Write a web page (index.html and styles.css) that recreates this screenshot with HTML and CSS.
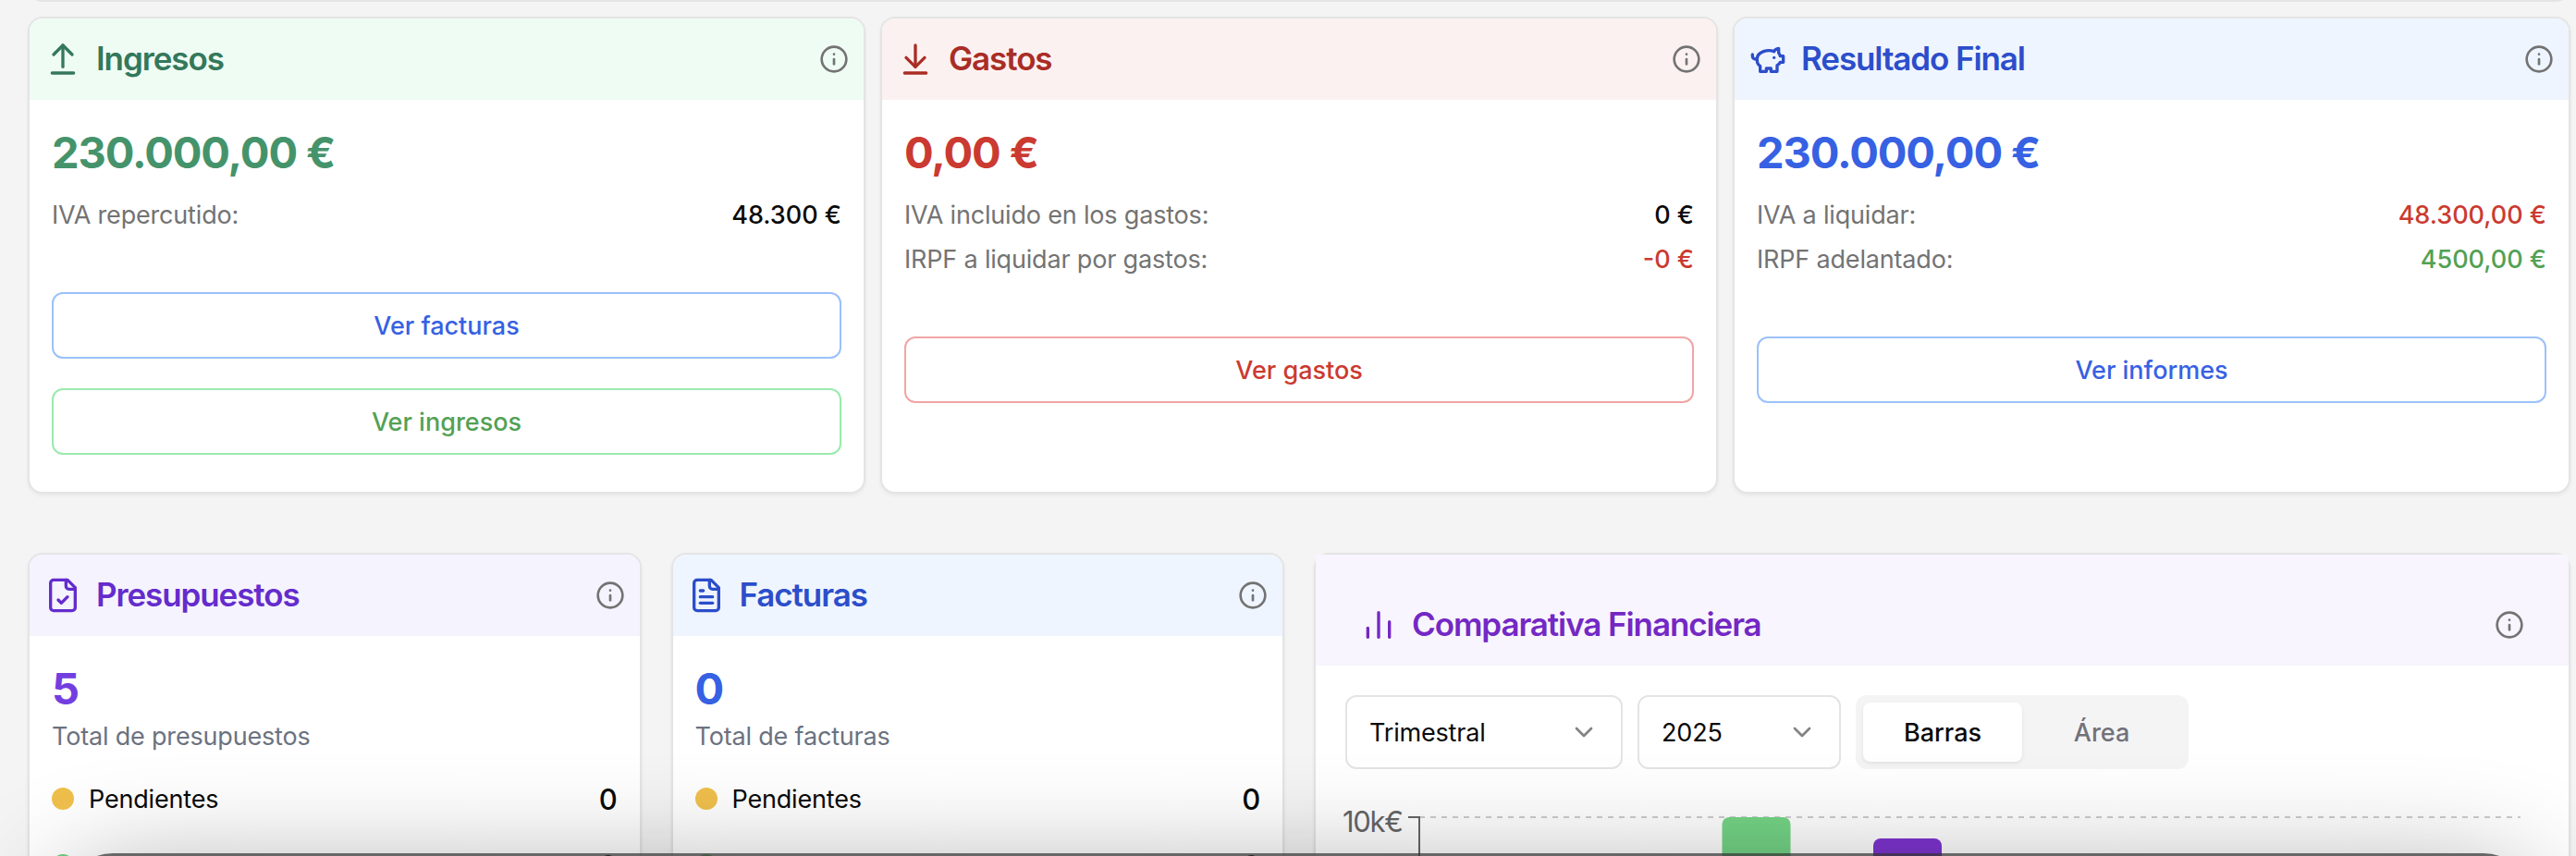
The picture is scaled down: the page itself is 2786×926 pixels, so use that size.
FILE: index.html
```html
<!DOCTYPE html>
<html lang="es">
<head>
<meta charset="utf-8">
<title>Panel financiero</title>
<link rel="stylesheet" href="styles.css">
</head>
<body>
<svg class="sprite" aria-hidden="true">
  <symbol id="info" viewBox="0 0 24 24"><circle cx="12" cy="12" r="10"/><path d="M12 16v-4"/><path d="M12 8h.01"/></symbol>
  <symbol id="chevron" viewBox="0 0 24 24"><path d="m6 9 6 6 6-6"/></symbol>
</svg>
<div class="page">
  <div class="card previous"></div>

  <section class="summary">
    <article class="card">
      <header class="card-header green">
        <svg class="icon" viewBox="0 0 24 24"><path d="m18 9-6-6-6 6"/><path d="M12 3v14"/><path d="M5 21h14"/></svg>
        <h2 class="title">Ingresos</h2>
        <svg class="icon info"><use href="#info"/></svg>
      </header>
      <div class="card-body">
        <div class="amount green-text">230.000,00 €</div>
        <div class="rows">
          <div class="row"><span class="label">IVA repercutido:</span><span class="value">48.300 €</span></div>
        </div>
        <div class="actions">
          <button class="btn blue-btn">Ver facturas</button>
          <button class="btn green-btn">Ver ingresos</button>
        </div>
      </div>
    </article>

    <article class="card">
      <header class="card-header red">
        <svg class="icon" viewBox="0 0 24 24"><path d="M12 17V3"/><path d="m6 11 6 6 6-6"/><path d="M19 21H5"/></svg>
        <h2 class="title">Gastos</h2>
        <svg class="icon info"><use href="#info"/></svg>
      </header>
      <div class="card-body">
        <div class="amount red-text">0,00 €</div>
        <div class="rows">
          <div class="row"><span class="label">IVA incluido en los gastos:</span><span class="value">0 €</span></div>
          <div class="row"><span class="label">IRPF a liquidar por gastos:</span><span class="value red-text">-0 €</span></div>
        </div>
        <div class="actions">
          <button class="btn red-btn">Ver gastos</button>
        </div>
      </div>
    </article>

    <article class="card">
      <header class="card-header blue">
        <svg class="icon" viewBox="0 0 24 24"><path d="M19 5c-1.5 0-2.8 1.4-3 2-3.5-1.5-11-.3-11 5 0 1.8 0 3 2 4.5V20h4v-2h3v2h4v-4c1-.5 1.7-1 2-2h2v-4h-2c0-1-.5-1.5-1-2V5z"/><path d="M2 9v1c0 1.1.9 2 2 2h1"/><path d="M16 11h.01"/></svg>
        <h2 class="title">Resultado Final</h2>
        <svg class="icon info"><use href="#info"/></svg>
      </header>
      <div class="card-body">
        <div class="amount blue-text">230.000,00 €</div>
        <div class="rows">
          <div class="row"><span class="label">IVA a liquidar:</span><span class="value red-text">48.300,00 €</span></div>
          <div class="row"><span class="label">IRPF adelantado:</span><span class="value lime-text">4500,00 €</span></div>
        </div>
        <div class="actions">
          <button class="btn blue-btn">Ver informes</button>
        </div>
      </div>
    </article>
  </section>

  <section class="details">
    <article class="card">
      <header class="card-header violet">
        <svg class="icon" viewBox="0 0 24 24"><path d="M15 2H6a2 2 0 0 0-2 2v16a2 2 0 0 0 2 2h12a2 2 0 0 0 2-2V7Z"/><path d="M14 2v4a2 2 0 0 0 2 2h4"/><path d="m9 15 2 2 4-4"/></svg>
        <h2 class="title">Presupuestos</h2>
        <svg class="icon info"><use href="#info"/></svg>
      </header>
      <div class="card-body">
        <div class="amount violet-text">5</div>
        <div class="caption">Total de presupuestos</div>
        <div class="statuses">
          <div class="status"><i class="dot amber-dot"></i><span>Pendientes</span><b class="count">0</b></div>
          <div class="status"><i class="dot green-dot"></i><span>Aceptados</span><b class="count">0</b></div>
        </div>
      </div>
    </article>

    <article class="card">
      <header class="card-header blue">
        <svg class="icon" viewBox="0 0 24 24"><path d="M15 2H6a2 2 0 0 0-2 2v16a2 2 0 0 0 2 2h12a2 2 0 0 0 2-2V7Z"/><path d="M14 2v4a2 2 0 0 0 2 2h4"/><path d="M10 9H8"/><path d="M16 13H8"/><path d="M16 17H8"/></svg>
        <h2 class="title">Facturas</h2>
        <svg class="icon info"><use href="#info"/></svg>
      </header>
      <div class="card-body">
        <div class="amount blue-text">0</div>
        <div class="caption">Total de facturas</div>
        <div class="statuses">
          <div class="status"><i class="dot amber-dot"></i><span>Pendientes</span><b class="count">0</b></div>
          <div class="status"><i class="dot green-dot"></i><span>Pagadas</span><b class="count">0</b></div>
        </div>
      </div>
    </article>

    <article class="card chart-card">
      <header class="card-header chart-header purple">
        <svg class="icon" viewBox="0 0 24 24"><path d="M19 20V10"/><path d="M12 20V4"/><path d="M5 20v-6"/></svg>
        <h2 class="title">Comparativa Financiera</h2>
        <svg class="icon info"><use href="#info"/></svg>
      </header>
      <div class="chart-body">
        <div class="filters">
          <div class="select period"><span>Trimestral</span><svg class="icon chevron"><use href="#chevron"/></svg></div>
          <div class="select year"><span>2025</span><svg class="icon chevron"><use href="#chevron"/></svg></div>
          <div class="tabs"><span class="tab active">Barras</span><span class="tab">Área</span></div>
        </div>
        <svg class="chart" viewBox="0 0 1291 80">
          <text class="tick-label" x="-3" y="48">10k€</text>
          <path class="grid-line" d="M80 32H1271"/>
          <path class="axis" d="M68 32H80V80"/>
          <rect x="407.500" y="32" width="74" height="60" rx="8" fill="#74d586"/>
          <rect x="571" y="55" width="74" height="60" rx="8" fill="#7e34d0"/>
        </svg>
      </div>
    </article>
  </section>

  <div class="dock"></div>
</div>
</body>
</html>
```
FILE: styles.css
```css
* { box-sizing: border-box; }

body {
  margin: 0;
  background: #f4f4f4;
  color: #0a0a0a;
  font-family: Inter, "Liberation Sans", sans-serif;
  font-size: 27px;
  line-height: 40px;
  letter-spacing: -0.18px;
}

.sprite { display: none; }

.page {
  position: relative;
  height: 926px;
  overflow: hidden;
  padding: 0 6px 0 30px;
}

.card {
  background: #fff;
  border: 2px solid #e4e4e4;
  border-radius: 16px;
  box-shadow: 0 2px 4px rgba(0, 0, 0, 0.06);
}

.previous {
  height: 40px;
  margin-top: -38px;
  box-shadow: none;
}

.summary {
  display: grid;
  grid-template-columns: repeat(3, 1fr);
  gap: 16px;
  height: 516px;
  margin-top: 16px;
}

.details {
  display: grid;
  grid-template-columns: repeat(4, 1fr);
  gap: 32px;
  height: 700px;
  margin-top: 64px;
}

.chart-card { grid-column: span 2; }

.card-header {
  display: flex;
  align-items: center;
  gap: 16px;
  height: 88px;
  padding: 0 16px;
  border-radius: 14px 14px 0 0;
}

.chart-header {
  height: 120px;
  padding: 32px 48px 0;
  border-radius: 0;
}

.green { background: #effcf4; color: #34785b; }
.red { background: #fcf1f1; color: #a92d25; }
.blue { background: #eff5fe; color: #2c4ecb; }
.violet { background: #f5f3fe; color: #642ccd; }
.purple { background: #f8f5fe; color: #7428c4; }

.green-text { color: #45936b; }
.lime-text { color: #53a155; }
.red-text { color: #cb3a31; }
.blue-text { color: #3761e3; }
.violet-text { color: #733ee0; }

.icon {
  width: 40px;
  height: 40px;
  flex: none;
  fill: none;
  stroke: currentColor;
  stroke-width: 2;
  stroke-linecap: round;
  stroke-linejoin: round;
}

.icon.info { width: 32px; height: 32px; margin-left: auto; color: #737373; }
.icon.chevron { width: 32px; height: 32px; opacity: 0.5; }

.title {
  margin: 0;
  padding-bottom: 2px;
  font-size: 35px;
  font-weight: 600;
  line-height: 54px;
  letter-spacing: -1.1px;
  white-space: nowrap;
}

.card-body { padding: 24px; }

.amount {
  height: 64px;
  padding-top: 1px;
  font-size: 47px;
  font-weight: 700;
  line-height: 64px;
  letter-spacing: -1.1px;
}

.rows { display: grid; gap: 8px; margin-top: 16px; }
.row { display: flex; justify-content: space-between; height: 40px; padding-top: 1px; }
.label { color: #737373; }
.value { font-weight: 450; letter-spacing: 0; }

.actions { display: grid; gap: 32px; margin-top: 64px; }

.btn {
  height: 72px;
  padding: 1px 0 0;
  border: 2px solid;
  border-radius: 12px;
  background: #fff;
  font: inherit;
  font-weight: 450;
  letter-spacing: 0;
}

.blue-btn { border-color: #9bc1fa; color: #3761e3; }
.green-btn { border-color: #9aeaae; color: #53a155; }
.red-btn { border-color: #f1a5a5; color: #cb3a31; }

.caption { height: 40px; padding-top: 1px; color: #6b7280; }

.statuses { display: grid; gap: 24px; margin-top: 24px; }
.status { display: flex; align-items: center; gap: 16px; height: 48px; }
.status span { padding-top: 2px; }
.dot { width: 24px; height: 24px; border-radius: 50%; }
.amber-dot { background: #f0c04c; }
.green-dot { background: #6ecf80; }
.count { margin-left: auto; padding-top: 1px; font-size: 31px; font-weight: 450; }

.chart-body { padding: 32px; }
.filters { display: flex; gap: 16px; }

.select {
  display: flex;
  align-items: center;
  justify-content: space-between;
  height: 80px;
  padding: 0 24px;
  border: 2px solid #e4e4e4;
  border-radius: 12px;
}

.select span { padding-top: 2px; }

.period { width: 300px; }
.year { width: 220px; }

.tabs {
  display: grid;
  grid-template-columns: 1fr 1fr;
  width: 360px;
  height: 80px;
  padding: 8px;
  border-radius: 12px;
  background: #f4f4f5;
  color: #71717a;
  font-weight: 450;
  letter-spacing: 0;
  line-height: 64px;
  text-align: center;
}

.tab { height: 64px; padding-top: 1px; }

.tab.active {
  border-radius: 8px;
  background: #fff;
  color: #0a0a0a;
  box-shadow: 0 2px 4px rgba(0, 0, 0, 0.08);
}

.chart {
  display: block;
  width: 1291px;
  height: 80px;
  margin-top: 20px;
  overflow: visible;
}

.tick-label { fill: #666; font-size: 31px; letter-spacing: -1.3px; }
.grid-line { fill: none; stroke: #ccc; stroke-width: 2; stroke-dasharray: 6 6; }
.axis { fill: none; stroke: #666; stroke-width: 2; }

/* Translucent window rising from the bottom edge over the page */
.dock {
  position: absolute;
  top: 923px;
  left: 70px;
  right: 48px;
  height: 400px;
  border-radius: 52px;
  background: rgba(50, 50, 50, 0.74);
  box-shadow: 0 36px 130px rgba(0, 0, 0, 0.46);
}
```
